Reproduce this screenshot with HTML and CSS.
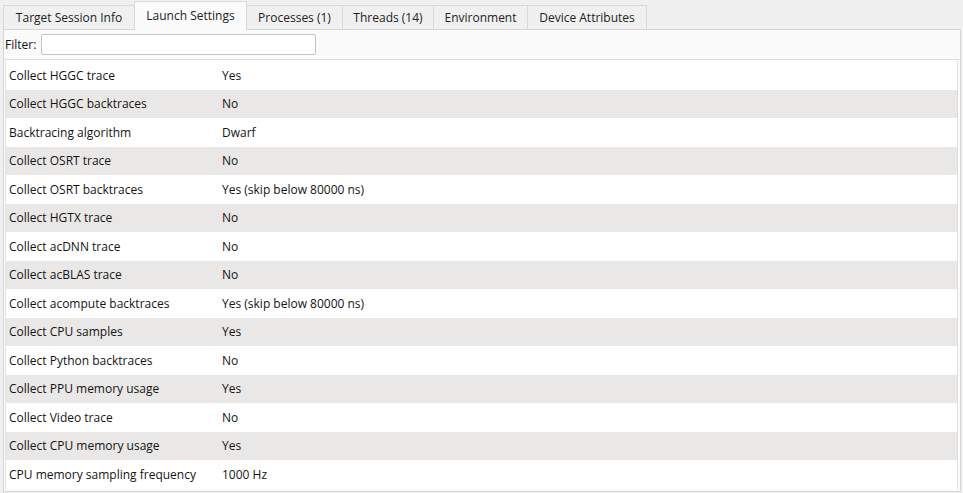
FILE: index.html
```html
<!DOCTYPE html>
<html>
<head>
<meta charset="utf-8">
<link rel="stylesheet" href="styles.css">
</head>
<body>
<div class="app">
  <div class="tabs">
    <div class="tab t1">Target Session Info</div>
    <div class="tab active t2">Launch Settings</div>
    <div class="tab t3">Processes (1)</div>
    <div class="tab t4">Threads (14)</div>
    <div class="tab t5">Environment</div>
    <div class="tab t6">Device Attributes</div>
  </div>
  <div class="panel">
    <div class="filter">
      <span class="flabel">Filter:</span>
      <div class="finput"></div>
    </div>
    <div class="table">
      <div class="row"><span class="k">Collect HGGC trace</span><span class="v">Yes</span></div>
      <div class="row alt"><span class="k">Collect HGGC backtraces</span><span class="v">No</span></div>
      <div class="row"><span class="k">Backtracing algorithm</span><span class="v">Dwarf</span></div>
      <div class="row alt"><span class="k">Collect OSRT trace</span><span class="v">No</span></div>
      <div class="row"><span class="k">Collect OSRT backtraces</span><span class="v">Yes (skip below 80000 ns)</span></div>
      <div class="row alt"><span class="k">Collect HGTX trace</span><span class="v">No</span></div>
      <div class="row"><span class="k">Collect acDNN trace</span><span class="v">No</span></div>
      <div class="row alt"><span class="k">Collect acBLAS trace</span><span class="v">No</span></div>
      <div class="row"><span class="k">Collect acompute backtraces</span><span class="v">Yes (skip below 80000 ns)</span></div>
      <div class="row alt"><span class="k">Collect CPU samples</span><span class="v">Yes</span></div>
      <div class="row"><span class="k">Collect Python backtraces</span><span class="v">No</span></div>
      <div class="row alt"><span class="k">Collect PPU memory usage</span><span class="v">Yes</span></div>
      <div class="row"><span class="k">Collect Video trace</span><span class="v">No</span></div>
      <div class="row alt"><span class="k">Collect CPU memory usage</span><span class="v">Yes</span></div>
      <div class="row"><span class="k">CPU memory sampling frequency</span><span class="v">1000 Hz</span></div>
    </div>
  </div>
</div>
</body>
</html>
```

FILE: styles.css
```css
html, body {
  margin: 0;
  padding: 0;
  background: #f0f0f0;
}
body {
  font-family: "Open Sans", "Noto Sans", sans-serif;
  font-size: 12px;
  color: #141414;
  width: 963px;
  height: 493px;
  overflow: hidden;
}
.app {
  padding: 1px 2px 0 3px;
  display: flex;
  flex-direction: column;
}
.tabs {
  display: flex;
  align-items: flex-end;
  height: 28px;
  position: relative;
  z-index: 1;
}
.tab {
  height: 24px;
  box-sizing: border-box;
  border: 1px solid #d9d9d9;
  border-bottom: none;
  border-right: none;
  background: #f0f0f0;
  display: flex;
  align-items: center;
  justify-content: center;
  color: #222222;
}
.tab.t6 { border-right: 1px solid #d9d9d9; }
.tab.active {
  height: 29px;
  margin-bottom: -1px;
  background: #fbfbfb;
  border-right: 1px solid #d9d9d9;
  padding-bottom: 2px;
}
.tab.active + .tab { border-left: none; }
.t1 { width: 131px; }
.t2 { width: 113px; }
.t3 { width: 95px; }
.t4 { width: 91px; }
.t5 { width: 94px; }
.t6 { width: 120px; }
.panel {
  border: 1px solid #d6d6d6;
  background: #fbfbfb;
  height: 463px;
  box-sizing: border-box;
  display: flex;
  flex-direction: column;
}
.filter {
  display: flex;
  align-items: center;
  height: 30px;
  border-bottom: 1px solid #dcdcdc;
  box-sizing: border-box;
  padding-left: 1px;
}
.flabel {
  width: 36px;
}
.finput {
  width: 275px;
  height: 21px;
  box-sizing: border-box;
  border: 1px solid #c4c4c4;
  border-radius: 2px;
  background: #ffffff;
}
.table {
  margin: 1px 2px 0 1px;
  border-right: 1px solid #e0e0e0;
  border-left: 1px solid #e4e4e4;
}
.row {
  height: 28.53px;
  display: flex;
  align-items: center;
  background: #ffffff;
}
.row.alt {
  background: #e9e8e6;
}
.k {
  width: 216px;
  padding-left: 3px;
  box-sizing: border-box;
}
.v {
  flex: 1;
}
```
